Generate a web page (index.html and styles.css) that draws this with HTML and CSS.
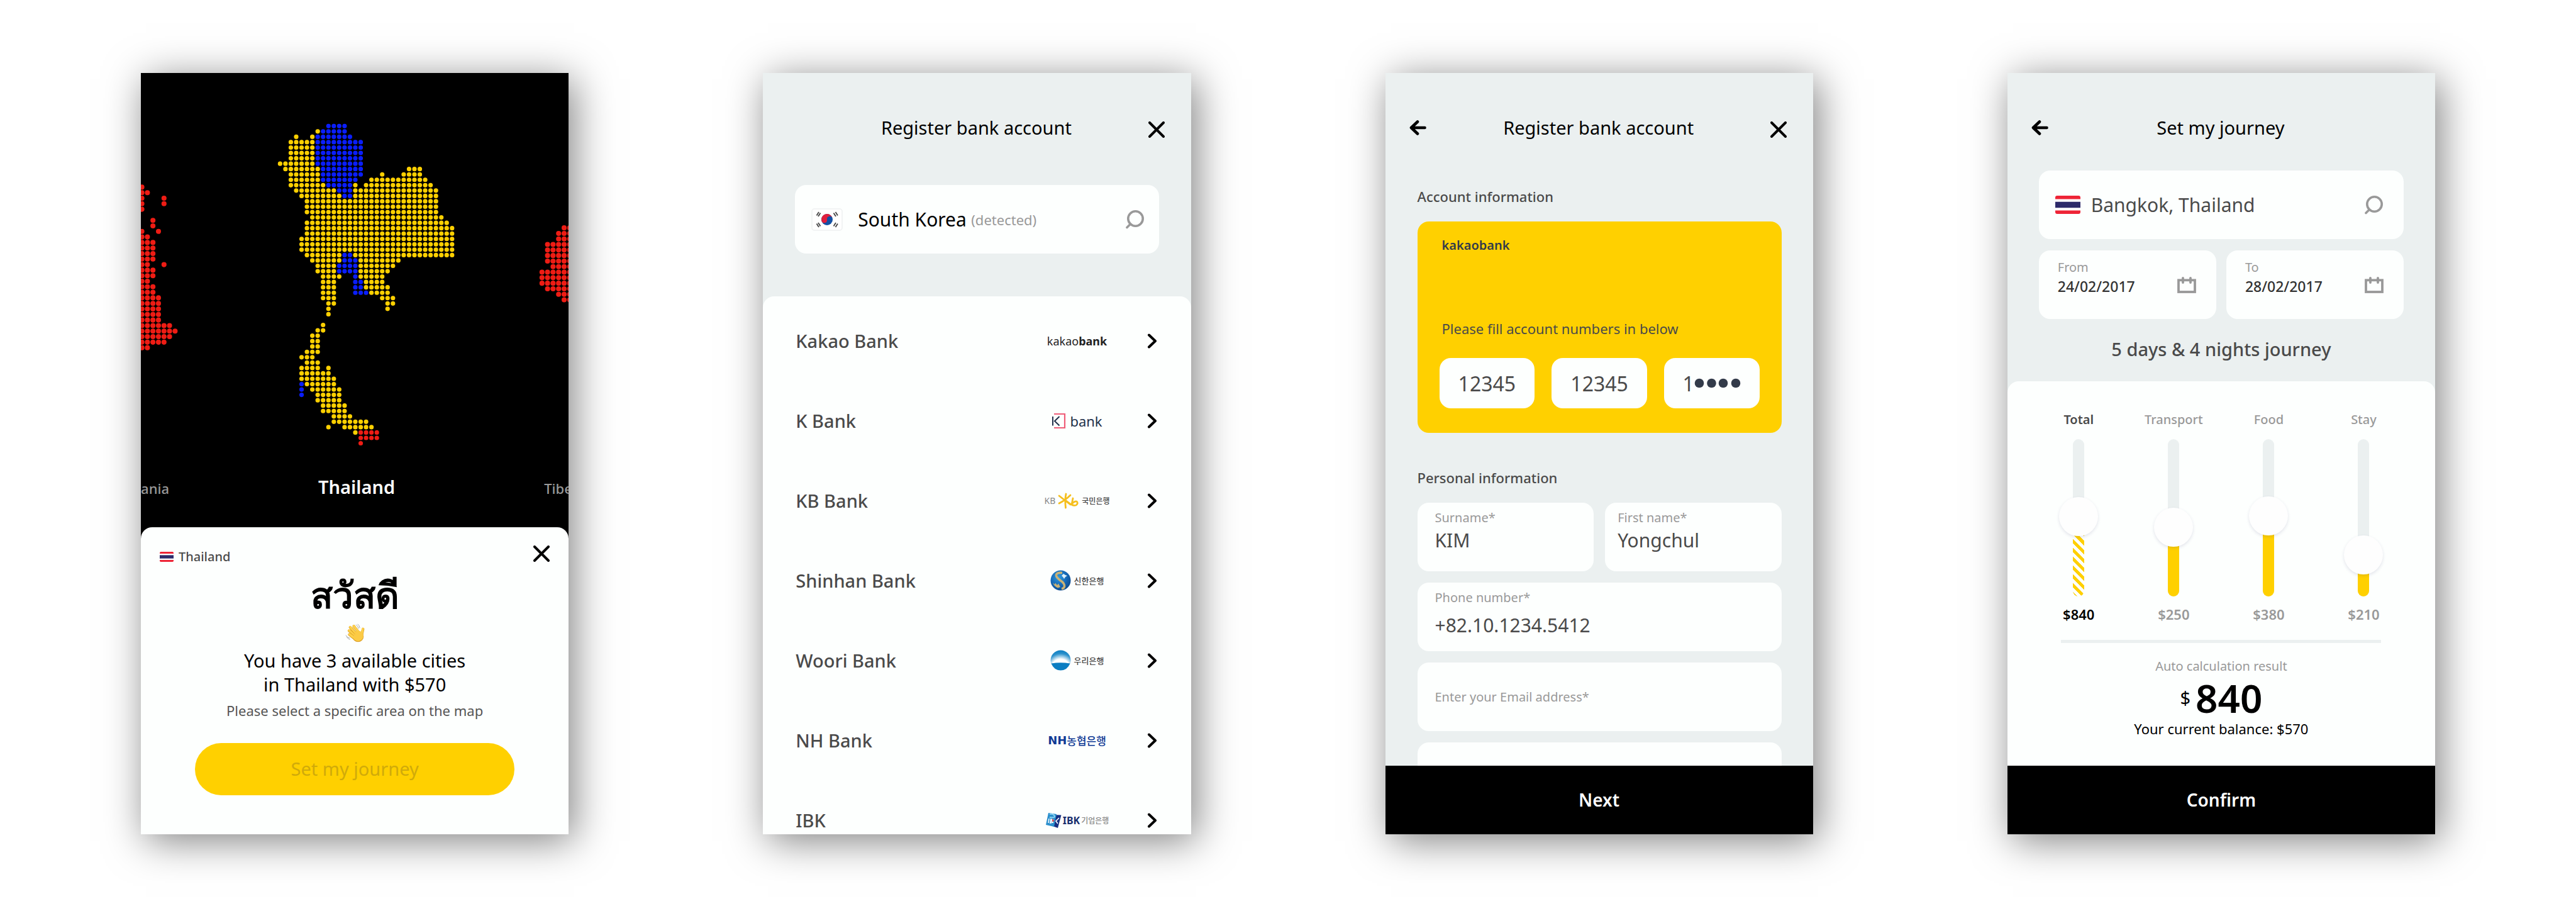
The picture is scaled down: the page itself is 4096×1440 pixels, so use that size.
FILE: index.html
```html
<!DOCTYPE html>
<html lang="en">
<head>
<meta charset="utf-8">
<meta name="viewport" content="width=device-width, initial-scale=1">
<title>Travel savings app</title>
<link rel="stylesheet" href="styles.css">
</head>
<body>
<svg class="sprite" aria-hidden="true">
  <symbol id="close" viewBox="0 0 26 26"><path d="M2 2L24 24M24 2L2 24" fill="none" stroke="currentColor" stroke-width="4" stroke-linecap="round"/></symbol>
  <symbol id="back" viewBox="0 0 27 24"><path d="M3 12H24.500M13 2.500L3 12L13 21.500" fill="none" stroke="currentColor" stroke-width="4.600" stroke-linecap="round" stroke-linejoin="round"/></symbol>
  <symbol id="search" viewBox="0 0 30 30"><g fill="none" stroke="currentColor" stroke-width="3.600" stroke-linecap="round"><circle cx="16.500" cy="13.500" r="11.700"/><path d="M8.500 22L3 27.500"/></g></symbol>
  <symbol id="calendar" viewBox="0 0 30 26"><g fill="none" stroke="currentColor" stroke-width="3.800"><rect x="2" y="5.300" width="26" height="18.700"/><path d="M9 2V9M21 2V9" stroke-linecap="round"/></g></symbol>
  <symbol id="next" viewBox="0 0 16 24"><path d="M3 2.500L13 12L3 21.500" fill="none" stroke="currentColor" stroke-width="4" stroke-linecap="round" stroke-linejoin="round"/></symbol>
  <symbol id="thai-flag" viewBox="0 0 40 29" preserveAspectRatio="none"><path fill="#ee2436" d="M3 0H37Q40 0 40 3V26Q40 29 37 29H3Q0 29 0 26V3Q0 0 3 0Z"/><path fill="#fff" d="M0 5.500H40V23.500H0Z"/><path fill="#2d2a6a" d="M0 9.700H40V19.300H0Z"/></symbol>
</svg>

<main class="board">

  <section class="phone phone-dark" aria-label="Destination">
    <svg class="map" viewBox="0 0 680 638" role="img" aria-label="Dotted map of Thailand">
      <g fill="none" stroke-linecap="round" stroke-dasharray="0 1">
        <g transform="translate(221.100 84.400) scale(8.555)" stroke-width=".84">
          <path stroke="#ffd000" d="M7 1h.1M3 2h.1M6 2h.1M2 3h4.100M2 4h4.100M2 5h4.100M2 6h4.100M0 7h6.100M1 8h6.100M24 8h2.100M2 9h5.100M19 9h.1M23 9h3.100M2 10h5.100M17 10h10.100M2 11h6.100M14 11h.1M16 11h12.100M3 12h7.100M14 12h15.100M4 13h7.100M14 13h15.100M5 14h24.100M5 15h24.100M5 16h24.100M6 17h24.100M5 18h26.100M5 19h27.100M5 20h27.100M4 21h28.100M4 22h28.100M4 23h28.100M5 24h6.100M14 24h18.100M6 25h5.100M15 25h7.100M7 26h3.100M15 26h6.100M7 27h3.100M15 27h5.100M8 28h3.100M15 28h4.100M8 29h2.100M16 29h3.100M8 30h2.100M16 30h4.100M8 31h2.100M17 31h3.100M8 32h2.100M19 32h2.100M9 33h1.100M20 33h1.100M9 34h.1M20 34h.1M9 35h.1M8 37h.1M7 38h1.100M6 39h1.100M6 40h1.100M6 41h1.100M5 42h2.100M4 43h2.100M5 44h2.100M4 45h3.100M9 45h.1M4 46h5.100M4 47h6.100M5 48h5.100M6 49h5.100M7 50h4.100M7 51h4.100M8 52h4.100M8 53h4.100M10 54h3.100M10 55h6.100M9 56h.1M12 56h5.100M14 57h.1"/>
          <path stroke="#0a1eff" d="M9 0h3.100M8 1h4.100M7 2h6.100M7 3h8.100M7 4h8.100M7 5h8.100M7 6h8.100M7 7h8.100M8 8h7.100M8 9h7.100M8 10h6.100M9 11h4.100M11 12h2.100M12 13h1.100M12 24h1.100M12 25h2.100M11 26h3.100M11 27h3.100M14 28h.1M14 29h1.100M14 30h1.100M14 31h2.100M4 48h.1M4 49h.1M4 50h.1"/>
          <path stroke="#ee1c14" d="M15 57h3.100M15 58h3.100M15 59h.1"/>
        </g>
        <g stroke="#ee1c14" stroke-width=".92">
          <path transform="translate(1.100 181.600) scale(8.810)" d="M0 0h.1M0 1h1.100M0 2h.1M4 2h.1M0 3h.1M4 3h.1M0 4h.1M2 6h.1M2 7h.1M0 8h.1M3 8h.1M0 9h1.100M0 10h2.100M0 11h2.100M0 12h2.100M0 13h2.100M0 14h1.100M4 14h.1M0 15h2.100M0 16h2.100M0 17h1.100M0 18h2.100M0 19h2.100M0 20h3.100M0 21h3.100M0 22h3.100M0 23h3.100M0 24h3.100M0 25h5.100M0 26h6.100M0 27h5.100M0 28h4.100M0 29h1.100"/>
          <path transform="translate(638 246.400) scale(8.810)" d="M4 0h1.100M3 1h2.100M3 2h2.100M1 3h4.100M1 4h4.100M1 5h4.100M1 6h4.100M2 7h3.100M0 8h5.100M0 9h5.100M0 10h5.100M1 11h4.100M3 12h2.100M4 13h1.100"/>
        </g>
      </g>
    </svg>
    <div class="places">
      <span class="place-prev">Mauritania</span>
      <h2 class="place-current">Thailand</h2>
      <span class="place-next">Tibet</span>
    </div>
    <div class="sheet greeting">
      <div class="greeting-bar">
        <span class="country"><svg class="flag-small"><use href="#thai-flag"/></svg>Thailand</span>
        <button class="icon-button" type="button" aria-label="Close"><svg class="icon-close"><use href="#close"/></svg></button>
      </div>
      <p class="hello" lang="th">สวัสดี</p>
      <svg class="wave" viewBox="350 260 120 118" role="img" aria-label="Waving hand">
        <g fill="none" stroke-linecap="round">
          <g stroke="#d99a1c" stroke-width="17"><path d="M403 277L442 327M380 284L428 338M373 305L418 345M375 329L414 360M460 295L450 342"/></g>
          <ellipse cx="429" cy="341" rx="35" ry="34" fill="#d99a1c"/>
          <g stroke="#fdd04b" stroke-width="14"><path d="M402 275L442 325M380 282L428 336M373 303L418 343M375 327L414 357M459 293L450 340"/></g>
          <ellipse cx="429" cy="338" rx="33" ry="33" fill="#fccb45"/>
          <path d="M393 284L414 311M381 299L409 326M380 317L402 336" stroke="#e0a428" stroke-width="3"/>
          <path d="M417 268Q430 277 432 291M427 264Q439 273 440 287M358 345Q366 357 378 360M353 335Q360 348 376 351" stroke="#8c8f94" stroke-width="3"/>
        </g>
      </svg>
      <p class="offer">You have 3 available cities<br>in Thailand with $570</p>
      <p class="hint">Please select a specific area on the map</p>
      <button class="pill" type="button">Set my journey</button>
    </div>
  </section>

  <section class="phone" aria-label="Choose a bank">
    <header class="bar">
      <span></span>
      <h2 class="bar-title">Register bank account</h2>
      <button class="icon-button bar-close" type="button" aria-label="Close"><svg class="icon-close"><use href="#close"/></svg></button>
    </header>
    <div class="search country-search">
      <svg class="flag-korea" viewBox="0 0 50 36" aria-hidden="true">
        <rect x="1" y="1" width="48" height="34" rx="4" fill="#fff" stroke="#f2f4f4" stroke-width="2"/>
        <circle cx="25" cy="18" r="9" fill="#1350a4"/><path d="M16 18A9 9 0 0 1 34 18A4.500 4.500 0 0 0 25 18A4.500 4.500 0 0 1 16 18Z" fill="#e01f3d" transform="rotate(-12 25 18)"/>
        <g stroke="#444" stroke-width="1.800"><path d="M8.500 11.500L12 6M11 13L14.500 7.500M35.500 7.500L39 13M38.500 6L42 11.500M8.500 24.500L12 30M11 23L14.500 28.500M35.500 28.500L39 23M38.500 30L42 24.500"/></g>
      </svg>
      <input class="search-input country-input" type="text" aria-label="Country" value="South Korea">
      <span class="detected">(detected)</span>
      <button class="icon-button search-button" type="button" aria-label="Search"><svg class="icon-search"><use href="#search"/></svg></button>
    </div>
    <ul class="sheet banks">
      <li><a class="bank" href="#kakao"><span>Kakao Bank</span><span class="logo logo-kakao">kakao<b>bank</b></span><svg class="icon-next"><use href="#next"/></svg></a></li>
      <li><a class="bank" href="#kbank"><span>K Bank</span>
        <span class="logo logo-k"><svg width="24" height="26" viewBox="0 0 24 26"><path d="M4 2H21V24H4" fill="none" stroke="#ef5d78" stroke-width="2.200"/><path d="M2 6V20.500M12.500 6L5 13.300L12.500 20.500" fill="none" stroke="#22304a" stroke-width="2"/></svg>bank</span>
        <svg class="icon-next"><use href="#next"/></svg></a></li>
      <li><a class="bank" href="#kb"><span>KB Bank</span>
        <span class="logo logo-kb"><span class="kb">KB</span><svg width="34" height="26" viewBox="0 0 34 26"><g fill="none" stroke="#f5bf1d" stroke-width="2.800" stroke-linecap="round" stroke-linejoin="round"><path d="M13 2Q11 12 12.500 24M2 5L20 19M2 17Q12 12 20 4M12 12L20 18M24 9L22 19Q25 21 29 20Q33 17 30 14Q27 13 23 17"/></g></svg><span lang="ko">국민은행</span></span>
        <svg class="icon-next"><use href="#next"/></svg></a></li>
      <li><a class="bank" href="#shinhan"><span>Shinhan Bank</span>
        <span class="logo logo-seal"><svg width="33" height="33" viewBox="0 0 33 33"><defs><radialGradient id="globe" cx=".4" cy=".35" r=".7"><stop offset="0" stop-color="#2f9be0"/><stop offset=".6" stop-color="#1466b4"/><stop offset="1" stop-color="#0d4a8c"/></radialGradient></defs><circle cx="16.500" cy="16.500" r="16" fill="url(#globe)"/><path d="M19 4.500Q9 3.500 9.500 9Q10 12 16 16.500Q23 21 22.500 26Q22 29 18 30" fill="none" stroke="#c9b277" stroke-width="3.600"/><path d="M4 20L7 23L8 20.500L11 24L13 21.500L16 27L12 28.500Q6 26 4 20Z" fill="#c9b277"/><path d="M18 9L21 6L24 8L27 9L24 11L22 14L20 11Z" fill="#dff0fa"/></svg><span lang="ko">신한은행</span></span>
        <svg class="icon-next"><use href="#next"/></svg></a></li>
      <li><a class="bank" href="#woori"><span>Woori Bank</span>
        <span class="logo logo-seal"><svg width="33" height="33" viewBox="0 0 33 33"><defs><radialGradient id="dawn" gradientUnits="userSpaceOnUse" cx="16.500" cy="29" r="29"><stop offset=".5" stop-color="#fff"/><stop offset=".8" stop-color="#2a90cb"/><stop offset="1" stop-color="#0a7dc2"/></radialGradient></defs><circle cx="16.500" cy="16.500" r="16" fill="url(#dawn)"/><path d="M1.500 21.500Q16.500 19 31.500 21.500Q27 32.500 16.500 32.500T1.500 21.500Z" fill="#0a7dc2"/></svg><span lang="ko">우리은행</span></span>
        <svg class="icon-next"><use href="#next"/></svg></a></li>
      <li><a class="bank" href="#nh"><span>NH Bank</span><span class="logo logo-nh"><b>NH</b><span lang="ko">농협은행</span></span><svg class="icon-next"><use href="#next"/></svg></a></li>
      <li><a class="bank" href="#ibk"><span>IBK</span>
        <span class="logo logo-ibk"><svg width="26" height="26" viewBox="0 0 26 26"><path d="M11 4L25.500 4.500L20 25L9 21Z" fill="#152f83"/><path d="M5 1L18 3L14 23L1 20Z" fill="#2a8fcd"/><path d="M7 3Q14 2 15 7Q15 9 7 8" fill="none" stroke="#8fd3f2" stroke-width="2"/><path d="M6 10L5 17M9 11L8 17L12 16L9.500 14L12 12ZM22 9L17 14L20 18" fill="none" stroke="#fff" stroke-width="1.600"/><path d="M11 10L15 14L11 15Z" fill="#e24a55"/></svg><b>IBK</b><span lang="ko">기업은행</span></span>
        <svg class="icon-next"><use href="#next"/></svg></a></li>
    </ul>
  </section>

  <section class="phone" aria-label="Account details">
    <div class="scroll">
      <header class="bar">
        <button class="icon-button" type="button" aria-label="Back"><svg class="icon-back"><use href="#back"/></svg></button>
        <h2 class="bar-title">Register bank account</h2>
        <button class="icon-button bar-close" type="button" aria-label="Close"><svg class="icon-close"><use href="#close"/></svg></button>
      </header>
      <form class="form">
        <h3 class="form-title">Account information</h3>
        <div class="card">
          <p class="card-brand">kakaobank</p>
          <p class="card-hint">Please fill account numbers in below</p>
          <div class="digits">
            <input class="digit-box" type="text" aria-label="Account number, part 1" value="12345">
            <input class="digit-box" type="text" aria-label="Account number, part 2" value="12345">
            <div class="digit-box digit-masked">
              <input class="digit-input" type="text" aria-label="Account number, part 3" value="1">
              <svg width="74" height="16" viewBox="0 0 74 16" aria-hidden="true"><g fill="#333b4a"><circle cx="8" cy="8" r="7.300"/><circle cx="27.500" cy="8" r="7.300"/><circle cx="46" cy="8" r="7.300"/><circle cx="66" cy="8" r="7.300"/></g></svg>
            </div>
          </div>
        </div>
        <h3 class="form-title personal">Personal information</h3>
        <div class="fields">
          <div class="field"><label for="surname">Surname*</label><input id="surname" type="text" value="KIM"></div>
          <div class="field field-tight"><label for="first">First name*</label><input id="first" type="text" value="Yongchul"></div>
          <div class="field field-wide field-tall"><label for="phone">Phone number*</label><input id="phone" type="tel" value="+82.10.1234.5412"></div>
          <div class="field field-wide field-empty"><input type="email" aria-label="Email address" placeholder="Enter your Email address*"></div>
          <div class="field field-wide field-empty"><input type="text" aria-label="Home address"></div>
        </div>
      </form>
    </div>
    <button class="footer" type="button">Next</button>
  </section>

  <section class="phone" aria-label="Journey budget">
    <header class="bar">
      <button class="icon-button" type="button" aria-label="Back"><svg class="icon-back"><use href="#back"/></svg></button>
      <h2 class="bar-title">Set my journey</h2>
      <span></span>
    </header>
    <div class="trip">
      <div class="search city-search">
        <svg class="flag-large" aria-hidden="true"><use href="#thai-flag"/></svg>
        <input class="search-input city-input" type="text" aria-label="City" value="Bangkok, Thailand">
        <button class="icon-button search-button" type="button" aria-label="Search"><svg class="icon-search"><use href="#search"/></svg></button>
      </div>
      <div class="dates">
        <div class="date"><div class="date-text"><label for="from">From</label><input id="from" type="text" value="24/02/2017"></div><svg class="icon-calendar" aria-hidden="true"><use href="#calendar"/></svg></div>
        <div class="date"><div class="date-text"><label for="to">To</label><input id="to" type="text" value="28/02/2017"></div><svg class="icon-calendar" aria-hidden="true"><use href="#calendar"/></svg></div>
      </div>
    </div>
    <h3 class="length">5 days &amp; 4 nights journey</h3>
    <div class="sheet budget">
      <div class="sliders">
        <div class="slider slider-total"><label for="total">Total</label><div class="slide"><div class="track"><div class="fill" style="height:51%"></div></div><input id="total" type="range" min="0" max="100" value="51"></div><output>$840</output></div>
        <div class="slider"><label for="transport">Transport</label><div class="slide"><div class="track"><div class="fill" style="height:44%"></div></div><input id="transport" type="range" min="0" max="100" value="42"></div><output>$250</output></div>
        <div class="slider"><label for="food">Food</label><div class="slide"><div class="track"><div class="fill" style="height:52%"></div></div><input id="food" type="range" min="0" max="100" value="52"></div><output>$380</output></div>
        <div class="slider"><label for="stay">Stay</label><div class="slide"><div class="track"><div class="fill" style="height:27%"></div></div><input id="stay" type="range" min="0" max="100" value="19"></div><output>$210</output></div>
      </div>
      <hr class="rule">
      <p class="result-label">Auto calculation result</p>
      <p class="result"><span class="currency">$</span><b>840</b></p>
      <p class="balance">Your current balance: $570</p>
    </div>
    <button class="footer" type="button">Confirm</button>
  </section>

</main>
</body>
</html>
```
FILE: styles.css
```css
:root {
  --paper: #fdfffe;
  --mist: #ebf0f0;
  --yellow: #ffd000;
  --ink: #4a4a4a;
  --grey: #999;
  --radius: 18px;
  --inset: 51px;
}

* { box-sizing: border-box; }

body {
  margin: 0;
  background: #fff;
  color: #000;
  font-family: "Noto Sans", "Noto Sans CJK KR", sans-serif;
  font-size: 22px;
  line-height: 30px;
}

h2, h3, p, ul { margin: 0; padding: 0; font-weight: 500; }
ul { list-style: none; }
input, button { font: inherit; color: inherit; border: 0; padding: 0; margin: 0; background: none; min-width: 0; }
svg { display: block; flex: none; }

.sprite { position: absolute; width: 0; height: 0; }

.board {
  min-height: 100vh;
  padding: 116px 224px 114px;
  display: grid;
  grid-template-columns: repeat(4, minmax(0, 1fr));
  gap: 309px;
  align-content: center;
}

.phone {
  aspect-ratio: 9 / 16;
  min-height: 0;
  display: flex;
  flex-direction: column;
  overflow: hidden;
  background: var(--mist);
  box-shadow: 8px 10px 60px rgba(0, 0, 0, .5);
}
.phone-dark { background: #000; }

.sheet { background: var(--paper); border-radius: var(--radius) var(--radius) 0 0; }

/* icons */
.icon-button { display: flex; align-items: center; justify-content: center; cursor: pointer; }
.icon-close { width: 26px; height: 26px; }
.icon-back { width: 27px; height: 24px; }
.icon-search { width: 30px; height: 30px; }
.icon-calendar { width: 30px; height: 26px; color: var(--grey); }
.icon-next { width: 16px; height: 24px; color: #000; }

/* top bar */
.bar {
  display: grid;
  grid-template-columns: 40px 1fr 40px;
  align-items: center;
  padding: 67px 40px 0 38px;
  height: 107px;
  flex: none;
}
.bar .icon-button { justify-content: flex-start; }
.bar .bar-close { justify-content: flex-end; padding: 6px 2px 0 0; }
.bar-title { font-size: 29px; line-height: 40px; font-weight: 400; text-align: center; }

/* destination */
.map { width: 100%; flex: 1; min-height: 0; }
.places {
  display: grid;
  grid-template-columns: 45px 1fr 39px;
  align-items: baseline;
  padding-bottom: 44px;
  color: #fff;
}
.place-prev, .place-next { display: flex; color: var(--grey); font-weight: 500; white-space: nowrap; }
.place-prev { justify-content: flex-end; }
.place-current { font-size: 29px; line-height: 40px; font-weight: 600; text-align: center; }

.greeting {
  display: flex;
  flex-direction: column;
  align-items: center;
  padding: 29px 30px 62px;
  text-align: center;
}
.greeting-bar { display: flex; justify-content: space-between; align-self: stretch; height: 32px; }
.greeting-bar .icon-button { align-self: flex-start; }
.country { display: flex; align-items: center; align-self: flex-end; gap: 8px; font-size: 20px; line-height: 28px; font-weight: 500; color: var(--ink); }
.flag-small { width: 22px; height: 16px; }
.hello { font-size: 58px; line-height: 92px; font-weight: 700; }
.wave { width: 31px; height: 30px; }
.offer { font-size: 29px; line-height: 38px; font-weight: 400; padding-top: 10px; }
.hint { padding-top: 7px; color: #555; font-weight: 400; }
.pill {
  width: 508px;
  max-width: 100%;
  height: 83px;
  margin-top: 37px;
  border-radius: 42px;
  background: var(--yellow);
  color: #d0aa0a;
  font-size: 29px;
}

/* search boxes */
.search {
  display: flex;
  align-items: center;
  min-height: 109px;
  padding: 0 24px 0 26px;
  border-radius: var(--radius);
  background: var(--paper);
}
.search-input { font-size: 30px; line-height: 40px; height: 40px; }
.search-button { color: var(--grey); margin-left: auto; }
.country-search { margin: 71px var(--inset) 68px; }
.flag-korea { width: 50px; height: 36px; }
.country-input { width: 180px; margin-left: 24px; }
.detected { color: var(--grey); }
.city-search { padding-right: 33px; }
.flag-large { width: 40px; height: 29px; }
.city-input { flex: 1; margin-left: 17px; color: var(--ink); }

/* bank list */
.banks { flex: 1; min-height: 0; padding: 7px 54px 0 52px; }
.bank {
  display: grid;
  grid-template-columns: 1fr 106px 16px;
  column-gap: 58px;
  align-items: center;
  height: 127px;
  color: var(--ink);
  font-size: 29px;
  line-height: 40px;
  font-weight: 500;
  text-decoration: none;
}
.logo { display: flex; align-items: center; justify-content: center; font-size: 18px; line-height: 26px; font-weight: 400; white-space: nowrap; }
.logo [lang="ko"] { font-family: "Noto Sans CJK KR", sans-serif; font-weight: 500; color: #444; }
.logo-kakao { color: #222; }
.logo-k { font-size: 22px; gap: 5px; color: #22304a; }
.logo-kb { gap: 4px; font-size: 12px; }
.kb { font-size: 14px; color: #888; }
.logo-seal { gap: 5px; font-size: 13px; }
.logo-nh { color: #0f3a94; font-size: 17px; }
.logo-nh b { font-family: "DejaVu Sans", sans-serif; font-size: 18px; }
.logo-nh [lang="ko"] { color: inherit; font-weight: 500; }
.logo-ibk { gap: 2px; font-size: 12px; }
.logo-ibk b { font-size: 16px; color: #1a2f6e; }
.logo-ibk [lang="ko"] { color: #888; }

/* account form */
.scroll { flex: 1; min-height: 0; overflow: hidden; }
.form { padding: 74px 50px 0 51px; color: var(--ink); }
.form-title { font-size: 22px; line-height: 30px; font-weight: 500; }
.personal { padding-top: 56px; }
.card {
  margin-top: 25px;
  padding: 24px 35px 39px;
  border-radius: var(--radius);
  background: var(--yellow);
}
.card-brand { padding-left: 4px; font-size: 20px; line-height: 28px; font-weight: 600; color: #333b4a; }
.card-hint { padding: 103px 4px 32px; font-weight: 400; }
.digits { display: grid; grid-template-columns: repeat(3, minmax(0, 1fr)); gap: 27px; }
.digit-box {
  width: 100%;
  height: 80px;
  border-radius: var(--radius);
  background: var(--paper);
  font-size: 32px;
  text-align: center;
}
.digit-masked { display: flex; align-items: center; justify-content: center; }
.digit-input { width: 19px; font-size: 32px; }

.fields { display: grid; grid-template-columns: repeat(2, minmax(0, 1fr)); gap: 18px; padding-top: 25px; }
.field {
  display: flex;
  flex-direction: column;
  gap: 2px;
  min-height: 109px;
  padding: 10px 28px 0;
  border-radius: var(--radius);
  background: var(--paper);
}
.field label { font-size: 20px; line-height: 28px; color: var(--grey); }
.field input { font-size: 30px; line-height: 40px; height: 40px; }
.field-tight { padding-left: 20px; }
.field-wide { grid-column: 1 / -1; }
.field-tall { gap: 10px; }
.field-empty { justify-content: center; padding-top: 0; }
.field-empty input { font-size: 20px; }
.field input::placeholder { color: var(--grey); opacity: 1; }

.footer { flex: none; height: 109px; background: #000; color: #fff; font-size: 28px; font-weight: 600; }

/* journey */
.trip { display: grid; gap: 18px; padding: 48px 50px 28px; }
.dates { display: grid; grid-template-columns: repeat(2, minmax(0, 1fr)); gap: 16px; }
.date {
  display: flex;
  align-items: center;
  min-height: 109px;
  padding: 0 32px 0 30px;
  border-radius: var(--radius);
  background: var(--paper);
}
.date-text { display: flex; flex-direction: column; flex: 1; align-self: flex-start; padding-top: 13px; min-width: 0; }
.date-text label { font-size: 20px; line-height: 28px; color: var(--grey); }
.date-text input { width: 100%; height: 32px; font-size: 23px; font-weight: 500; color: #333; }
.length { padding-bottom: 31px; font-size: 29px; line-height: 40px; font-weight: 500; color: var(--ink); text-align: center; }

.budget { flex: 1; padding: 47px 38px 0; text-align: center; }
.sliders { display: grid; grid-template-columns: repeat(4, minmax(0, 1fr)); }
.slider { display: flex; flex-direction: column; align-items: center; color: var(--grey); font-weight: 500; }
.slider label { font-size: 20px; line-height: 28px; }
.slider output { font-weight: 600; }
.slider-total label { color: var(--ink); font-weight: 600; }
.slider-total output { color: #000; }
.slide { display: grid; justify-items: center; height: 250px; margin: 17px 0 13px; }
.slide > * { grid-area: 1 / 1; }
.track { display: flex; align-items: flex-end; width: 18px; height: 250px; border-radius: 9px; overflow: hidden; background: var(--mist); }
.fill { width: 100%; background: var(--yellow); }
.slider-total .fill { background: repeating-linear-gradient(45deg, var(--yellow) 0 5px, var(--paper) 5px 10px); }
.slide input {
  appearance: none;
  writing-mode: vertical-lr;
  direction: rtl;
  width: 62px;
  height: 250px;
  cursor: pointer;
}
.slide input::-webkit-slider-runnable-track { width: 62px; height: 250px; background: none; }
.slide input::-webkit-slider-thumb {
  appearance: none;
  width: 62px;
  height: 62px;
  border-radius: 50%;
  background: #fefefe;
  box-shadow: 0 2px 5px rgba(60, 60, 110, .14);
}
.rule { width: 509px; max-width: 100%; height: 5px; margin: 26px auto 23px; border: 0; background: var(--mist); }
.result-label { font-size: 20px; line-height: 28px; font-weight: 400; color: var(--grey); }
.result { display: flex; align-items: center; justify-content: center; gap: 8px; height: 60px; margin-top: 6px; font-size: 62px; line-height: 60px; }
.result b { font-weight: 600; }
.currency { font-size: 29px; font-weight: 400; }
.balance { padding-top: 4px; font-weight: 400; }
```
